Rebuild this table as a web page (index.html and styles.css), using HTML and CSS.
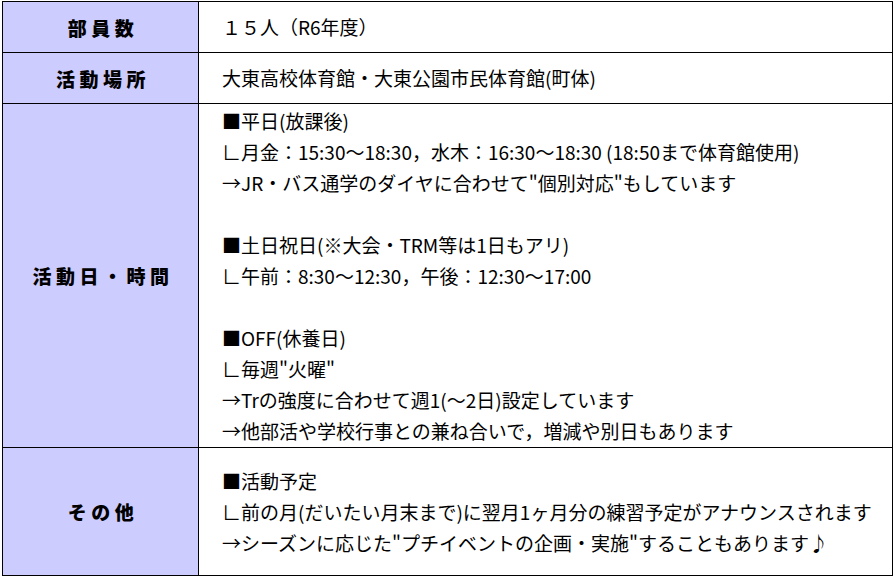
FILE: index.html
```html
<!DOCTYPE html>
<html lang="ja">
<head>
<meta charset="utf-8">
<link rel="stylesheet" href="styles.css">
</head>
<body>
<table class="info">
  <tr class="row-short">
    <th class="label">部員数</th>
    <td class="value">１５人（R6年度）</td>
  </tr>
  <tr class="row-short">
    <th class="label">活動場所</th>
    <td class="value">大東高校体育館・大東公園市民体育館(町体)</td>
  </tr>
  <tr>
    <th class="label">活動日・時間</th>
    <td class="value tall">
      <div class="line">■平日(放課後)</div>
      <div class="line">∟月金：15:30～18:30，水木：16:30～18:30 (18:50まで体育館使用)</div>
      <div class="line">→JR・バス通学のダイヤに合わせて"個別対応"もしています</div>
      <div class="line blank"></div>
      <div class="line">■土日祝日(※大会・TRM等は1日もアリ)</div>
      <div class="line">∟午前：8:30～12:30，午後：12:30～17:00</div>
      <div class="line blank"></div>
      <div class="line">■OFF(休養日)</div>
      <div class="line">∟毎週"火曜"</div>
      <div class="line">→Trの強度に合わせて週1(～2日)設定しています</div>
      <div class="line">→他部活や学校行事との兼ね合いで，増減や別日もあります</div>
    </td>
  </tr>
  <tr class="row-last">
    <th class="label">その他</th>
    <td class="value">
      <div class="line">■活動予定</div>
      <div class="line">∟前の月(だいたい月末まで)に翌月1ヶ月分の練習予定がアナウンスされます</div>
      <div class="line">→シーズンに応じた"プチイベントの企画・実施"することもあります♪</div>
    </td>
  </tr>
</table>
</body>
</html>
```

FILE: styles.css
```css
html, body {
  margin: 0;
  padding: 0;
  background: #ffffff;
}

body {
  padding: 1px 0 0 2px;
  font-family: "Noto Sans CJK JP", "Noto Sans", sans-serif;
  color: #000;
}

.info {
  border-collapse: collapse;
  width: 891px;
  table-layout: fixed;
}

.info th,
.info td {
  border: 1px solid #000;
  padding: 0;
  vertical-align: middle;
}

.label {
  width: 190px;
  background: #ccccff;
  font-weight: 900;
  font-size: 19px;
  letter-spacing: 4.5px;
  text-align: center;
  padding-left: 5px !important;
}

.value {
  font-size: 19px;
  line-height: 31px;
  padding-left: 23px !important;
  text-align: left;
  white-space: nowrap;
}

.row-short {
  height: 51px;
}

.row-short .value {
  line-height: 24px;
}

.tall {
  padding-top: 1px !important;
  padding-bottom: 1px !important;
}

.line {
  height: 31px;
}

.row-last {
  height: 128px;
}
```
